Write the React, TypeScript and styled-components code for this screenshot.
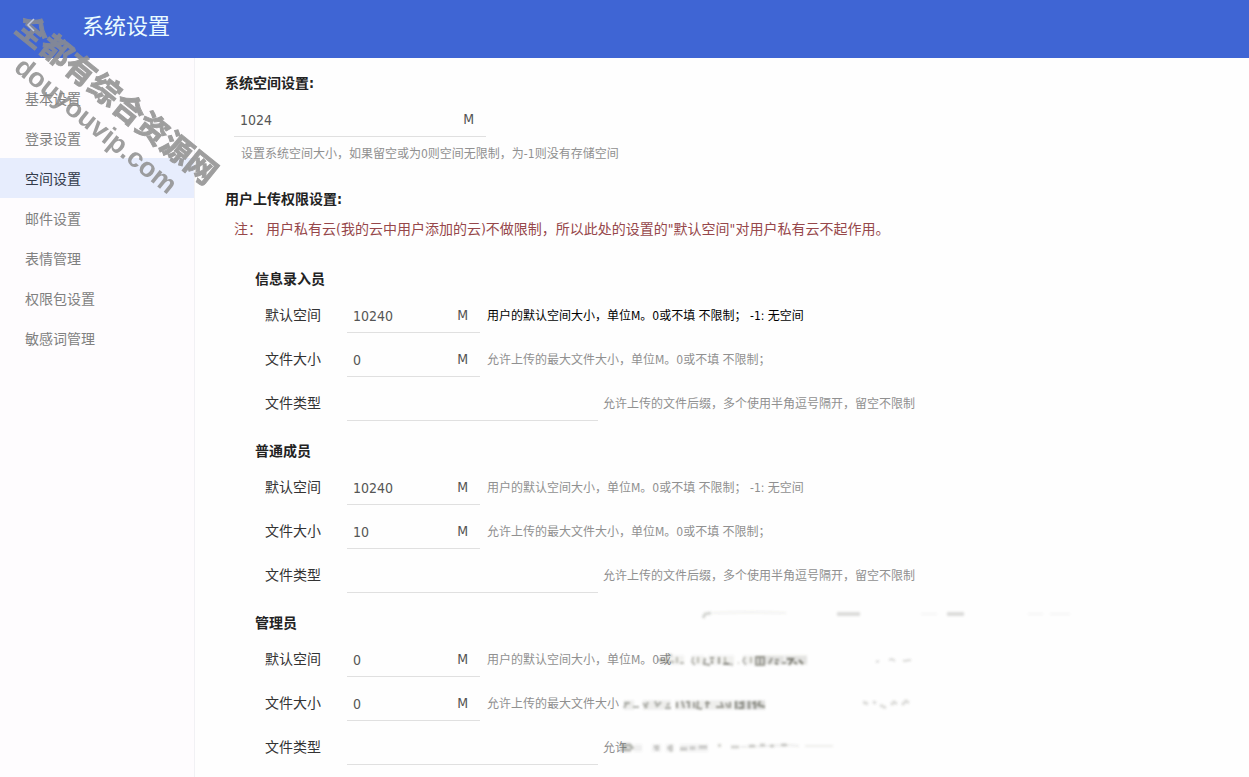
import React, { useId } from "react";
import styled, { createGlobalStyle } from "styled-components";

const GlobalStyle = createGlobalStyle`
  * { box-sizing: border-box; }
  body {
    margin: 0;
    background: #fefefe;
    color: #333;
    font: 14px/24px "DejaVu Sans Condensed", "Noto Sans", "Noto Sans CJK SC", sans-serif;
  }
  h1, h2, h3, p, ul { margin: 0; padding: 0; }
`;

const Page = styled.div`
  position: relative;
  display: flex;
  flex-direction: column;
  height: 100vh;
  overflow: hidden;
`;

const Header = styled.header`
  display: flex;
  flex: none;
  align-items: center;
  height: 58px;
  padding: 0 20px 4px;
  background: #3f65d4;
`;

const BackButton = styled.button`
  position: relative;
  z-index: 1;
  display: flex;
  width: 62px;
  padding: 0 6px 4px;
  border: 0;
  background: none;
  color: #c3cbe0;
`;

const Title = styled.h1`
  font-size: 22px;
  line-height: 32px;
  font-weight: 400;
  color: #e9fbff;
`;

const Body = styled.div`
  display: flex;
  flex: 1;
  min-height: 0;
`;

const Sidebar = styled.nav`
  flex: none;
  width: 195px;
  padding-top: 20px;
  border-right: 1px solid #f1f1f4;
  background: #fefcfe;
`;

const MenuLink = styled.a<{ $active?: boolean }>`
  display: block;
  height: 40px;
  padding: 1px 0 0 25px;
  line-height: 40px;
  text-decoration: none;
  color: ${(p) => (p.$active ? "#333b4a" : "#808080")};
  background: ${(p) => (p.$active ? "#e7edfd" : "transparent")};
`;

const Main = styled.main`
  position: relative;
  flex: 1;
  min-width: 0;
  padding: 11px 30px 0;
  overflow: hidden;
`;

const SectionTitle = styled.h2`
  font-size: 14px;
  line-height: 28px;
  font-weight: 700;
  color: #222;
`;

const Section = styled.section`
  & + & { margin-top: 19px; }
`;

const SectionBody = styled.div`
  padding: 4px 0 0 9px;
`;

const Warning = styled.p`
  color: #96474a;
`;

const Field = styled.span<{ $width: number }>`
  display: flex;
  align-items: center;
  width: ${(p) => p.$width}px;
  height: 36px;
  padding: 1px 12px 0 6px;
  border-bottom: 1px solid #e0e0e0;
  color: #555;
`;

const TextInput = styled.input`
  flex: 1;
  min-width: 0;
  padding: 2px 0 0;
  border: 0;
  outline: 0;
  background: none;
  font: inherit;
  color: #555;
`;

const SpaceHint = styled.p`
  padding: 5px 0 0 7px;
  font-size: 12px;
  color: #909090;
`;

const Groups = styled.div`
  display: flex;
  flex-direction: column;
  gap: 12px;
  margin-top: 24px;
  padding-left: 30px;
`;

const GroupTitle = styled.h3`
  font-size: 14px;
  line-height: 28px;
  font-weight: 700;
  color: #222;
`;

const Row = styled.div`
  display: flex;
  align-items: center;
  height: 44px;
  padding-left: 10px;
  white-space: nowrap;
`;

const RowLabel = styled.label`
  width: 82px;
`;

const RowHint = styled.span<{ $gap: number; $strong?: boolean }>`
  padding: 2px 0 0 ${(p) => p.$gap}px;
  font-size: 12px;
  color: ${(p) => (p.$strong ? "#000" : "#909090")};
`;

const Watermark = styled.svg`
  position: absolute;
  top: 0;
  left: 0;
  overflow: visible;
  pointer-events: none;
`;

const SmudgeLayer = styled.svg`
  position: absolute;
  top: 542px;
  left: 405px;
  pointer-events: none;
`;

const menu = ["基本设置", "登录设置", "空间设置", "邮件设置", "表情管理", "权限包设置", "敏感词管理"];

type RowData = { label: string; value: string; hint: string; strong?: boolean; wide?: boolean };

const spaceHint = "用户的默认空间大小，单位M。0或不填 不限制； -1: 无空间";
const sizeHint = "允许上传的最大文件大小，单位M。0或不填 不限制；";
const typeHint = "允许上传的文件后缀，多个使用半角逗号隔开，留空不限制";

const groups: { title: string; rows: RowData[] }[] = [
  {
    title: "信息录入员",
    rows: [
      { label: "默认空间", value: "10240", hint: spaceHint, strong: true },
      { label: "文件大小", value: "0", hint: sizeHint },
      { label: "文件类型", value: "", hint: typeHint, wide: true },
    ],
  },
  {
    title: "普通成员",
    rows: [
      { label: "默认空间", value: "10240", hint: spaceHint },
      { label: "文件大小", value: "10", hint: sizeHint },
      { label: "文件类型", value: "", hint: typeHint, wide: true },
    ],
  },
  {
    title: "管理员",
    rows: [
      { label: "默认空间", value: "0", hint: "用户的默认空间大小，单位M。0或" },
      { label: "文件大小", value: "0", hint: "允许上传的最大文件大小" },
      { label: "文件类型", value: "", hint: "允许", wide: true },
    ],
  },
];

function SettingRow({ label, value, hint, strong, wide }: RowData) {
  const id = useId();
  return (
    <Row>
      <RowLabel htmlFor={id}>{label}</RowLabel>
      <Field $width={wide ? 251 : 133}>
        <TextInput id={id} defaultValue={value} />
        {!wide && "M"}
      </Field>
      <RowHint $gap={wide ? 5 : 7} $strong={strong}>{hint}</RowHint>
    </Row>
  );
}

// Faded remains of rubbed-out writing: each path is a set of short strokes of one darkness.
const smudges = [
  { d: "M60 60h24M92 60h12M108 60h26M143 60h12", o: 0.08, w: 9 },
  { d: "M156 60h28M185 60h22", o: 0.16, w: 9 },
  { d: "M24 105h10M43 105h28M75 105h58", o: 0.1, w: 9 },
  { d: "M134 105h31", o: 0.2, w: 9 },
  { d: "M34 148h8M52 148h9M66 148h8M80 148h28", o: 0.09, w: 7 },
  { d: "M103 18l2-4 6-1", o: 0.24, w: 3 },
  { d: "M112 13l40-1 34 1", o: 0.08, w: 2 },
  { d: "M237 14h23M347 14h17", o: 0.2, w: 4 },
  { d: "M321 14h16M428 14h15M450 14h20", o: 0.05, w: 2 },
  { d: "M66 56l6-1M66 62h8M77 57v6M80 63h4M93 57l-1 5 3 3M98 57v6M125 57v6l8 2M138 63h1M145 57l-2 4 3 4M151 57v6", o: 0.36, w: 2 },
  { d: "M58 60h8M105 58l-1 6 6 1M110 58h4M112 60v4M119 57v7M123 64h6M156 57h8v8h-8zM160 57v8M172 58l-3 6M175 60h4M182 63h4", o: 0.55, w: 2 },
  { d: "M175 63l3 1M187 59h6l-4 6M194 62l3 2M199 60l4 4", o: 0.75, w: 2 },
  { d: "M24 103h6M27 102l-3 6M33 107h6M43 103l4 5M48 102l-3 6M55 101l2 5 4-4M65 108h6M69 103l-2 3", o: 0.44, w: 2 },
  { d: "M77 102v6M82 101l2 7M86 102h3v6M94 102v6M98 101l-1 7 5 1M105 103h5M107 101v7M116 107h7l-2-5M126 103l2 5M130 102v6", o: 0.55, w: 2 },
  { d: "M136 101v8M139 103h4M138 108h5M143 101v8M149 101v8M152 103h4M155 101v8M160 101l-2 4 7 2", o: 0.6, w: 2 },
  { d: "M20 145h10l3 4M20 150h11M25 144v5", o: 0.45, w: 3 },
  { d: "M54 147h5M57 145v6M68 149l4-4M71 147v5M80 149h7M90 148h5M99 147h8M118 145l3 1M131 147h8M149 146h6M160 145h5M170 146h4M181 145h6", o: 0.26, w: 3 },
  { d: "M140 147l48-2 11 1M205 146h28", o: 0.1, w: 2 },
  { d: "M276 62l3-1M289 60l3-1 3 2M303 61l8-1", o: 0.22, w: 2 },
  { d: "M263 102l5 2M273 102l3 1M280 105l6 3M291 105l3-3 3 2M302 105l4-4 3 2", o: 0.2, w: 3 },
];

function Smudges() {
  return (
    <SmudgeLayer width="500" height="177" aria-hidden="true">
      <defs>
        <filter id="soften" x="0" y="0" width="500" height="177" filterUnits="userSpaceOnUse">
          <feGaussianBlur stdDeviation="0.8" />
        </filter>
      </defs>
      <g filter="url(#soften)" fill="none" stroke="#55564a">
        {smudges.map((s) => (
          <path key={s.d} d={s.d} strokeWidth={s.w} strokeOpacity={s.o} />
        ))}
      </g>
    </SmudgeLayer>
  );
}

export default function App() {
  return (
    <Page>
      <GlobalStyle />
      <Header>
        <BackButton aria-label="返回">
          <svg width="10" height="14" viewBox="0 0 10 14" fill="none" stroke="currentColor" strokeWidth="1.5">
            <path d="M8 1 2 7l6 6" />
          </svg>
        </BackButton>
        <Title>系统设置</Title>
      </Header>
      <Body>
        <Sidebar>
          {menu.map((name) => (
            <MenuLink key={name} href="#" $active={name === "空间设置"}>{name}</MenuLink>
          ))}
        </Sidebar>
        <Main>
          <Section>
            <SectionTitle>系统空间设置:</SectionTitle>
            <SectionBody>
              <Field $width={252}>
                <TextInput aria-label="系统空间设置" defaultValue="1024" />M
              </Field>
              <SpaceHint>设置系统空间大小，如果留空或为0则空间无限制，为-1则没有存储空间</SpaceHint>
            </SectionBody>
          </Section>
          <Section>
            <SectionTitle>用户上传权限设置:</SectionTitle>
            <SectionBody>
              <Warning>注： 用户私有云(我的云中用户添加的云)不做限制，所以此处的设置的"默认空间"对用户私有云不起作用。</Warning>
            </SectionBody>
            <Groups>
              {groups.map((g) => (
                <section key={g.title}>
                  <GroupTitle>{g.title}</GroupTitle>
                  {g.rows.map((r) => (
                    <SettingRow key={r.label} {...r} />
                  ))}
                </section>
              ))}
            </Groups>
          </Section>
          <Smudges />
        </Main>
      </Body>
      <Watermark width="240" height="210" aria-hidden="true">
        <g
          transform="translate(106 113) rotate(39)"
          fill="#8e8e8e"
          stroke="#8e8e8e"
          opacity="0.85"
          fontWeight="700"
          textAnchor="middle"
        >
          <text y="-6" fontSize="31" strokeWidth="1" fontFamily='"Noto Sans CJK SC", sans-serif'>全都有综合资源网</text>
          <text y="25" fontSize="27" strokeWidth="0" fontFamily='"Liberation Sans", sans-serif'>douyouvip.com</text>
        </g>
      </Watermark>
    </Page>
  );
}
